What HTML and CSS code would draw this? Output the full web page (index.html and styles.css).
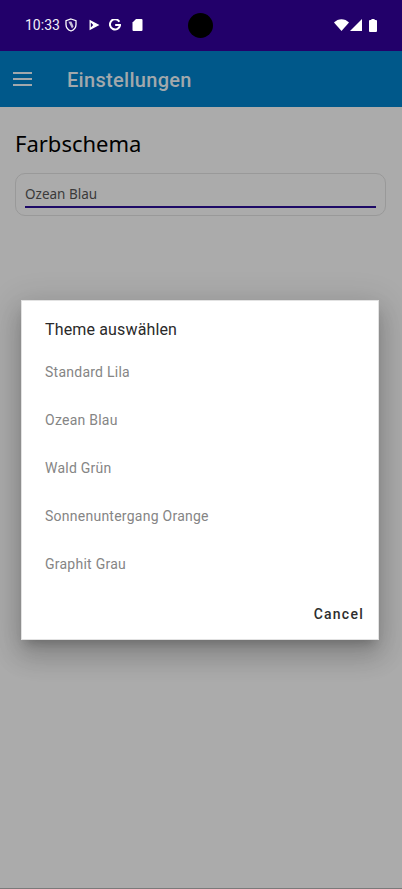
FILE: index.html
```html
<!DOCTYPE html>
<html lang="de">
<head>
<meta charset="utf-8">
<title>Einstellungen</title>
<link rel="stylesheet" href="styles.css">
</head>
<body>
<div class="screen">
  <header class="statusbar">
    <div class="status-left">
      <span class="time">10:33</span>
      <svg class="ic-shield" viewBox="0 0 12 14" width="12" height="14"><path d="M6 1 L11 2.6 V6.5 C11 9.8 8.8 12 6 13 C3.2 12 1 9.8 1 6.5 V2.6 Z" fill="none" stroke="#fff" stroke-width="1.3"/><path d="M3.4 3.8 L7 10.4 L8.6 8.6 L6.4 3.4 Z" fill="#fff" opacity=".75"/></svg>
      <svg class="ic-play" viewBox="0 0 12 12" width="11" height="12"><path d="M.6 .4 L11.4 6 L.6 11.6 Z M2 3.4 V8.6 L4.6 6 Z" fill="#fff" fill-rule="evenodd"/></svg>
      <svg class="ic-g" viewBox="0 0 13 13" width="12" height="12"><path d="M11.2 2.9 A5.5 5.5 0 1 0 12 6.6 H6.7" fill="none" stroke="#fff" stroke-width="2.2"/></svg>
      <svg class="ic-sd" viewBox="0 0 11 12" width="11" height="12"><path d="M4 0 H9.5 A1 1 0 0 1 10.5 1 V11 A1 1 0 0 1 9.5 12 H1.5 A1 1 0 0 1 .5 11 V3.5 Z" fill="#fff"/></svg>
    </div>
    <div class="status-right">
      <svg viewBox="0 0 15 12" width="15" height="12"><path d="M0 3.6 C4 -.9 11 -.9 15 3.6 L7.5 12 Z" fill="#fff"/></svg>
      <svg viewBox="0 0 12 12" width="12" height="12"><path d="M0 12 L12 0 V12 Z" fill="#fff"/></svg>
      <svg class="ic-batt" viewBox="0 0 8 13" width="8" height="13"><path d="M2.4 0 H5.6 V1 H7 A1 1 0 0 1 8 2 V12 A1 1 0 0 1 7 13 H1 A1 1 0 0 1 0 12 V2 A1 1 0 0 1 1 1 H2.4 Z" fill="#fff"/></svg>
    </div>
  </header>
  <div class="toolbar">
    <svg class="menu" viewBox="0 0 19 14" width="19" height="14"><path d="M0 1 H19 M0 7 H19 M0 13 H19" stroke="#a2a8ac" stroke-width="1.8"/></svg>
    <span class="title">Einstellungen</span>
  </div>
  <main class="content">
    <h1 class="heading">Farbschema</h1>
    <div class="field">
      <div class="field-value">Ozean Blau</div>
    </div>
  </main>
  <div class="camera"></div>
  <div class="dialog">
    <div class="dialog-title">Theme auswählen</div>
    <ul class="options">
      <li>Standard Lila</li>
      <li>Ozean Blau</li>
      <li>Wald Grün</li>
      <li>Sonnenuntergang Orange</li>
      <li>Graphit Grau</li>
    </ul>
    <div class="actions"><span class="cancel">Cancel</span></div>
  </div>
</div>
</body>
</html>
```
FILE: styles.css
```css
* { box-sizing: border-box; }
html, body { margin: 0; padding: 0; }
body { width: 402px; height: 889px; overflow: hidden; background: #ababab; font-family: Roboto, sans-serif; }
.screen { position: relative; width: 402px; height: 889px; display: flex; flex-direction: column; background: #ababab; border-bottom: 1px solid #7a7a7a; }
.statusbar { height: 51px; flex: none; background: #22006a; display: flex; align-items: center; justify-content: space-between; padding: 0 25px 1px 25px; color: #f2eff8; }
.status-left { display: flex; align-items: center; }
.time { font-size: 14px; line-height: 20px; width: 40px; letter-spacing: 0; }
.ic-play { margin-left: 12px; }
.ic-g { margin-left: 9px; }
.ic-sd { margin-left: 11px; }
.status-right { display: flex; align-items: center; gap: 1px; }
.ic-batt { margin-left: 6px; }
.toolbar { height: 56px; flex: none; background: #00588a; display: flex; align-items: center; padding-left: 13px; }
.title { margin-left: 35px; padding-top: 2px; font-size: 20px; font-weight: 500; color: #a2a8ac; line-height: 28px; letter-spacing: .3px; }
.content { flex: 1; padding: 20px 16px 0 15px; }
.heading { margin: 0; font-family: "Noto Sans", sans-serif; font-size: 22px; font-weight: 400; line-height: 32px; color: #000; }
.field { margin-top: 14px; height: 43px; border: 1px solid #999; border-radius: 10px; padding: 0 9px; }
.field-value { height: 34px; border-bottom: 2px solid #1d0a66; font-family: "Noto Sans", sans-serif; font-size: 13.5px; line-height: 40px; color: #3a3a3a; }
.camera { position: absolute; left: 188px; top: 13px; width: 25px; height: 25px; border-radius: 50%; background: #000; }
.dialog { position: absolute; left: 21px; top: 300px; width: 358px; height: 340px; background: #fff; border: 1px solid #e2e2e2; box-shadow: 0 8px 10px -5px rgba(0,0,0,.2), 0 16px 24px 2px rgba(0,0,0,.14), 0 6px 30px 5px rgba(0,0,0,.12); display: flex; flex-direction: column; }
.dialog-title { padding: 18px 23px 0; font-size: 16px; font-weight: 400; line-height: 22px; letter-spacing: .15px; color: #2a2a2a; }
.options { list-style: none; margin: 14px 0 0; padding: 0 23px; }
.options li { height: 48px; font-size: 14px; line-height: 34px; letter-spacing: .25px; color: #858585; }
.actions { margin-top: auto; display: flex; justify-content: flex-end; padding: 0 14px 16px 0; }
.cancel { font-size: 14px; font-weight: 500; line-height: 18px; letter-spacing: 1.25px; color: #2e2e2e; }
```
